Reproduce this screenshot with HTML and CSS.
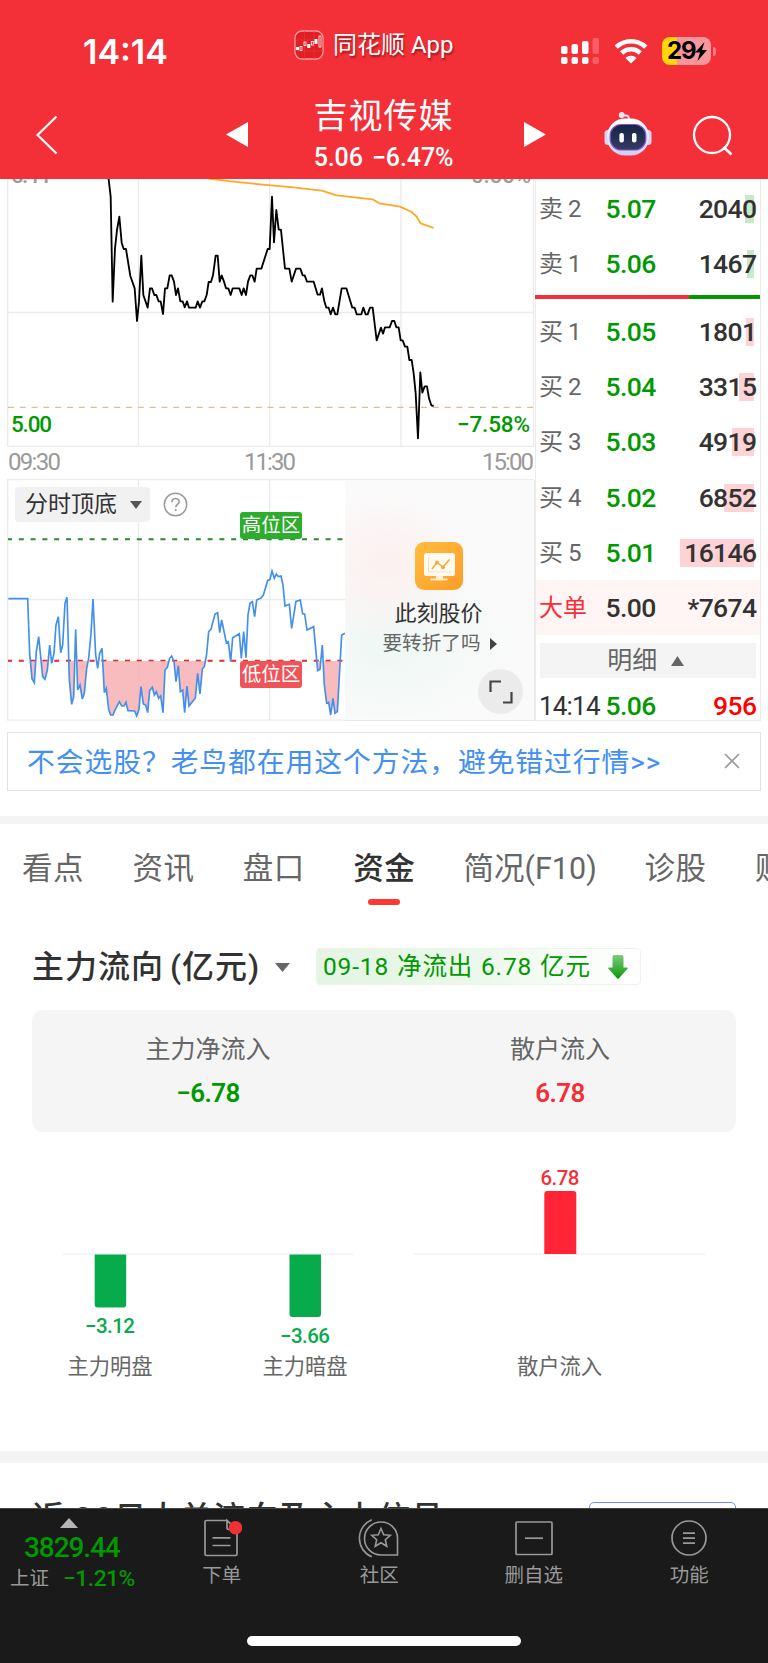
FILE: index.html
```html
<!DOCTYPE html>
<html lang="zh-CN">
<head>
<meta charset="utf-8">
<title>吉视传媒</title>
<link rel="stylesheet" href="styles.css">
</head>
<body>
<div class="app">
  <header class="header">
    <div class="status">
      <div class="clock">14:14</div>
      <div class="source">
        <svg width="30" height="30" viewBox="0 0 30 30"><rect x="1" y="1" width="28" height="28" rx="7" fill="#e01f24" stroke="#f79a9d" stroke-width="1.3"/><path d="M10.5 1v28M20 1v28M1 10h28M1 21h28" stroke="#e93a3e" stroke-width=".6"/><g fill="#fff"><rect x="2" y="17" width="3" height="3"/><rect x="13.300" y="14" width="3" height="4"/><rect x="20.500" y="9" width="3" height="5"/></g><g fill="none" stroke="#fff" stroke-width=".8"><rect x="6" y="16.500" width="2" height="4"/><rect x="10" y="12" width="2" height="3.500"/><rect x="17.300" y="11.500" width="2" height="3.500"/><rect x="25" y="6" width="2" height="11"/></g></svg>
        <span>同花顺 App</span>
      </div>
      <svg class="signal" width="40" height="28" viewBox="0 0 40 28"><g fill="#fff"><rect x="1" y="9" width="6.500" height="8" rx="2"/><rect x="11.500" y="7" width="6.500" height="10" rx="2"/><rect x="22" y="4" width="6.500" height="13" rx="2"/><rect x="1" y="20" width="6.500" height="7" rx="2"/><rect x="11.500" y="20" width="6.500" height="7" rx="2"/><rect x="22" y="20" width="6.500" height="7" rx="2"/></g><g fill="#fff" opacity=".22"><rect x="32.500" y="1" width="6.500" height="16" rx="2"/><rect x="32.500" y="20" width="6.500" height="7" rx="2"/></g></svg>
      <svg class="wifi" width="34" height="26" viewBox="0 0 34 26"><g fill="none" stroke="#fff" stroke-width="4.600"><path d="M2.200 9.200a21.500 21.500 0 0 1 29.600 0"/><path d="M7.600 15a13.700 13.700 0 0 1 18.800 0"/></g><path d="M17 25.500l-5.600-5.600a8.200 8.200 0 0 1 11.200 0z" fill="#fff"/></svg>
      <div class="battery"><span>29</span><svg width="12" height="19" viewBox="0 0 12 19"><path d="M9.500 0L0 10.500h5L2.500 19 12 8H7z" fill="#000"/></svg></div>
      <i class="battery-tip"></i>
    </div>
    <nav class="nav">
      <svg class="back" width="22" height="40" viewBox="0 0 22 40"><path d="M20.500 1.500L1.500 20l19 18.500" fill="none" stroke="#fff" stroke-width="2.200"/></svg>
      <svg class="prev" width="22" height="25" viewBox="0 0 22 25"><path d="M0 12.500L22 0v25z" fill="#fff"/></svg>
      <div class="stock"><h1>吉视传媒</h1><p>5.06 −6.47%</p></div>
      <svg class="next" width="22" height="25" viewBox="0 0 22 25"><path d="M22 12.500L0 0v25z" fill="#fff"/></svg>
      <svg class="robot" width="48" height="44" viewBox="0 0 48 44"><defs><linearGradient id="shell" x2="0" y2="1"><stop stop-color="#fff"/><stop offset="1" stop-color="#d3cdf3"/></linearGradient><linearGradient id="visor" x2="0" y2="1"><stop stop-color="#172343"/><stop offset="1" stop-color="#343b63"/></linearGradient></defs><path d="M18 3.500h4q3 0 3 4" fill="none" stroke="#f1e9f6" stroke-width="1.800"/><circle cx="17.700" cy="3" r="2.900" fill="#e6e6f5"/><rect x="0.500" y="18" width="7" height="15" rx="3.500" fill="#d8d3f2"/><rect x="40.500" y="18" width="7" height="15" rx="3.500" fill="#d8d3f2"/><rect x="3" y="6.500" width="42" height="37" rx="18" fill="url(#shell)"/><rect x="6.200" y="12.500" width="35.600" height="25.500" rx="11" fill="url(#visor)" stroke="#7458c8" stroke-width="1.200"/><rect x="15.400" y="21" width="4.500" height="9.500" rx="2" fill="#fff"/><rect x="28" y="21" width="4.500" height="9.500" rx="2" fill="#fff"/></svg>
      <svg class="search" width="42" height="42" viewBox="0 0 42 42"><circle cx="20" cy="20" r="18" fill="none" stroke="#fff" stroke-width="2.300"/><path d="M31.500 32l8 7.500" stroke="#fff" stroke-width="2.600"/></svg>
    </nav>
  </header>

  <section class="market">
    <div class="charts">
      <svg class="price-chart" width="535" height="301" viewBox="0 179 535 301">
        <g stroke="#ebebeb" stroke-width="1.300" fill="none"><path d="M7.700 179V446.300H533.500V179M138.500 179V446M269.700 179V446M401 179V446M8 312.500H533"/></g>
        <g class="axis dim"><text x="11" y="182.500" textLength="39">5.44</text><text x="471" y="182.500" textLength="60">0.00%</text></g>
        <path d="M8 407.300H533" stroke="#dfbd93" stroke-width="1.200" stroke-dasharray="6 5.800"/>
        <g transform="translate(0 170) scale(.33333)" fill="none" stroke-linejoin="round">
          <polyline stroke="#ffa726" stroke-width="5.500" points="625,26 700,35 780,43 880,52 965,62 1010,76 1118,88 1138,100 1200,110 1235,126 1250,140 1262,160 1301,174"/>
          <polyline stroke="#000" stroke-width="5.500" points="325,20 332,80 338,395 345,235 351,180 358,140 365,218 371,237 378,237 391,318 404,355 411,453 417,395 424,257 430,375 443,413 450,355 456,355 463,375 469,375 476,394 482,394 489,432 495,355 502,355 509,316 515,316 522,335 528,375 534,355 541,394 548,394 554,412 561,394 567,413 587,413 593,394 600,413 607,394 613,394 620,375 626,336 633,336 639,316 647,257 653,257 659,335 665,316 672,335 678,355 685,355 692,375 698,355 718,355 725,375 731,355 738,375 744,335 751,316 757,316 764,335 770,296 784,296 803,237 809,237 816,80 822,217 829,120 836,178 843,180 855,296 868,296 875,335 888,296 901,296 908,316 914,316 921,335 941,335 953,374 960,374 966,355 973,394 979,413 986,413 992,433 999,413 1006,433 1012,433 1025,355 1039,355 1057,413 1064,413 1070,433 1084,433 1090,413 1097,433 1103,433 1110,413 1118,413 1130,511 1143,473 1149,491 1155,472 1169,472 1176,453 1183,453 1189,472 1196,472 1202,511 1208,511 1215,530 1222,530 1228,570 1235,570 1241,610 1247,670 1254,805 1261,607 1267,668 1274,649 1281,649 1287,685 1294,706 1301,708"/>
        </g>
        <g class="axis low"><text x="11" y="432" textLength="41">5.00</text><text x="457" y="432" textLength="73">−7.58%</text></g>
        <g class="axis time"><text x="8" y="469.500" textLength="53">09:30</text><text x="244" y="469.500" textLength="52">11:30</text><text x="482" y="469.500" textLength="52">15:00</text></g>
      </svg>
      <div class="lower">
        <div class="indicator">
          <svg width="345" height="242" viewBox="0 479 345 242">
            <g stroke="#ebebeb" stroke-width="1.300" fill="none"><path d="M345 479.500H7.700V720.200H345M138.500 480V720M269.700 480V720M8 599.700H345"/></g>
            <clipPath id="below"><rect x="0" y="572" width="1050" height="200"/></clipPath>
            <path d="M8 539.200H345" stroke="#2a8a2e" stroke-width="2" stroke-dasharray="5 6.800" stroke-dashoffset="1"/>
            <path d="M8 660.800H345" stroke="#d8232a" stroke-width="2" stroke-dasharray="5 6.800" stroke-dashoffset="1"/>
            <g transform="translate(0 470) scale(.33333)">
              <polygon clip-path="url(#below)" fill="#f5a6a9" fill-opacity=".75" points="25,572 83,386 89,550 96,626 103,638 109,545 116,500 128,620 135,628 142,600 149,525 155,580 162,550 168,465 175,440 182,548 188,525 195,400 201,382 208,630 215,703 221,680 227,478 233,660 240,645 247,687 253,670 260,595 266,565 273,490 279,387 287,555 293,595 299,550 306,535 313,668 319,655 326,718 332,735 339,735 345,720 358,695 365,708 372,708 378,697 384,722 404,723 410,738 417,718 423,650 430,702 437,705 443,728 449,662 457,652 463,675 469,665 476,685 482,678 489,728 495,600 502,592 509,565 515,558 522,575 528,635 535,587 541,665 548,660 554,728 561,648 567,708 586,684 593,610 600,672 607,597 613,590 620,552 941,470 953,602 960,598 967,525 973,645 980,700 986,697 992,735 999,685 1005,730 1012,725 1025,495 1035,572"/>
              <polyline fill="none" stroke="#4390ec" stroke-width="5" points="25,386 83,386 89,550 96,626 103,638 109,545 116,500 128,620 135,628 142,600 149,525 155,580 162,550 168,465 175,440 182,548 188,525 195,400 201,382 208,630 215,703 221,680 227,478 233,660 240,645 247,687 253,670 260,595 266,565 273,490 279,387 287,555 293,595 299,550 306,535 313,668 319,655 326,718 332,735 339,735 345,720 358,695 365,708 372,708 378,697 384,722 404,723 410,738 417,718 423,650 430,702 437,705 443,728 449,662 457,652 463,675 469,665 476,685 482,678 489,728 495,600 502,592 509,565 515,558 522,575 528,635 535,587 541,665 548,660 554,728 561,648 567,708 586,684 593,610 600,672 607,597 613,590 620,552 626,485 633,478 645,432 653,428 659,488 665,450 679,518 685,515 692,575 698,503 718,491 724,565 731,485 738,563 744,435 750,400 757,395 764,440 770,390 783,384 790,375 803,332 810,328 816,303 823,325 829,312 835,320 843,318 849,345 855,408 868,403 875,475 888,394 901,390 908,432 914,432 921,480 941,470 953,602 960,598 967,525 973,645 980,700 986,697 992,735 999,685 1005,730 1012,725 1025,495 1035,490"/>
            </g>
          </svg>
          <div class="selector">分时顶底<svg width="12" height="8" viewBox="0 0 12 8"><path d="M0 0h12L6 8z" fill="#555"/></svg></div>
          <svg class="help" width="25" height="25" viewBox="0 0 25 25"><circle cx="12.500" cy="12.500" r="11.200" fill="none" stroke="#999" stroke-width="1.500"/><path d="M9 10.200c0-5 7.200-4.800 7.200-.4 0 2.500-3.500 2.800-3.500 5.400" fill="none" stroke="#999" stroke-width="1.600"/><circle cx="12.700" cy="18" r="1.100" fill="#999"/></svg>
          <span class="zone high">高位区</span>
          <span class="zone bottom">低位区</span>
        </div>
        <div class="promo">
          <svg class="promo-icon" width="48" height="48" viewBox="0 0 48 48"><defs><linearGradient id="gold" x2="1" y2="1"><stop stop-color="#ffbd3e"/><stop offset="1" stop-color="#ff9c27"/></linearGradient></defs><rect width="48" height="48" rx="9" fill="url(#gold)"/><rect x="9" y="11" width="31" height="23" rx="2.500" fill="#fffaf2"/><path d="M21 34h7v2.500h4.500v2h-17v-2H21z" fill="#ffeed4"/><path d="M13.500 15v15H36" fill="none" stroke="#ffe0b0" stroke-width="1"/><path d="M17 27l5-6.500 6 4.500 6.500-7.500" fill="none" stroke="#ffa52c" stroke-width="1.500"/><circle cx="22" cy="20.500" r="1.900" fill="#ffa52c"/><circle cx="28" cy="25.300" r="1.900" fill="#ffa52c"/></svg>
          <div class="promo-title">此刻股价</div>
          <div class="promo-sub">要转折了吗<svg width="7" height="12" viewBox="0 0 7 12"><path d="M0 0l7 6-7 6z" fill="#444"/></svg></div>
          <div class="expand"><svg width="24" height="24" viewBox="0 0 24 24"><path d="M1.500 12V1.500H12M14 22.500h8.500V12" fill="none" stroke="#444" stroke-width="2.200"/></svg></div>
        </div>
      </div>
    </div>
    <div class="book">
      <div class="row"><span>卖 2</span><b>5.07</b><em><i class="sell" style="width:9px"></i>2040</em></div>
      <div class="row"><span>卖 1</span><b>5.06</b><em><i class="sell" style="width:7px"></i>1467</em></div>
      <div class="ratio"><i></i></div>
      <div class="row"><span>买 1</span><b>5.05</b><em><i style="width:8px"></i>1801</em></div>
      <div class="row"><span>买 2</span><b>5.04</b><em><i style="width:15px"></i>3315</em></div>
      <div class="row"><span>买 3</span><b>5.03</b><em><i style="width:22px"></i>4919</em></div>
      <div class="row"><span>买 4</span><b>5.02</b><em><i style="width:30px"></i>6852</em></div>
      <div class="row"><span>买 5</span><b>5.01</b><em><i style="width:74px"></i>16146</em></div>
      <div class="row large"><span>大单</span><b>5.00</b><em>*7674</em></div>
      <div class="detail">明细<svg width="13" height="10" viewBox="0 0 13 10"><path d="M6.500 0L13 10H0z" fill="#666"/></svg></div>
      <div class="row tick"><span>14:14</span><b>5.06</b><em>956</em></div>
    </div>
  </section>

  <div class="notice"><span>不会选股？老鸟都在用这个方法，避免错过行情&gt;&gt;</span><svg width="16" height="16" viewBox="0 0 16 16"><path d="M1 1l14 14M15 1L1 15" stroke="#999" stroke-width="1.700"/></svg></div>

  <nav class="tabs"><span>看点</span><span>资讯</span><span>盘口</span><span class="active">资金</span><span class="wide">简况(F10)</span><span>诊股</span><span>财务</span></nav>

  <section class="flow">
    <div class="flow-head">
      <h2>主力流向<span>(亿元)</span></h2>
      <svg class="caret" width="15" height="9" viewBox="0 0 15 9"><path d="M0 0h15L7.500 9z" fill="#666"/></svg>
      <div class="tag"><span>09-18 净流出 6.78 亿元</span><svg width="20" height="24" viewBox="0 0 20 24"><defs><linearGradient id="drop" x2="0" y2="1"><stop stop-color="#7fcb7e"/><stop offset="1" stop-color="#089908"/></linearGradient></defs><path d="M4.500 2q0-2 2-2h7q2 0 2 2v10.500H19q1.500 0 .5 1.200l-8.500 9.600q-1 1-2 0L.5 13.700Q-.5 12.500 1 12.500h3.500z" fill="url(#drop)"/></svg></div>
    </div>
    <div class="summary">
      <div><span>主力净流入</span><b class="green">−6.78</b></div>
      <div><span>散户流入</span><b class="red">6.78</b></div>
    </div>
    <svg class="bars" width="768" height="319" viewBox="0 1132 768 319">
      <path d="M63 1254H353M414 1254H705" stroke="#f2f2f2" stroke-width="1.500"/>
      <path d="M94.700 1254.500h31.500v50q0 3-3 3h-25.500q-3 0-3-3zM289.500 1254.500H321v59.500q0 3-3 3h-25.500q-3 0-3-3z" fill="#07ab4b"/>
      <path d="M544.300 1254v-60q0-3 3-3h26q3 0 3 3v60z" fill="#ff2436"/>
      <g class="bar-value"><text x="110" y="1333.300" textLength="50" fill="#07ab4b">−3.12</text><text x="305" y="1342.700" textLength="50" fill="#07ab4b">−3.66</text><text x="560" y="1185" textLength="39" fill="#f5303a">6.78</text></g>
      <g class="bar-name"><text x="110" y="1374">主力明盘</text><text x="305" y="1374">主力暗盘</text><text x="559.500" y="1374">散户流入</text></g>
    </svg>
  </section>

  <section class="signals"><h2>近 <span>20</span>日大单流向及主力信号</h2><div class="outline"></div></section>

  <footer class="footer">
    <div class="dock">
      <div class="index"><svg width="18" height="10" viewBox="0 0 18 10"><path d="M9 0l9 10H0z" fill="#b5b5b5"/></svg><b>3829.44</b><p><span>上证</span><em>−1.21%</em></p></div>
      <div class="item order"><svg width="40" height="40" viewBox="0 0 40 40"><g fill="none" stroke="#999" stroke-width="1.700"><path d="M24.500 2.500H4.500Q3 2.500 3 4v32q0 1.500 1.500 1.500h29Q35 37.500 35 36V11.500h-8.500Q25 11.500 25 10V2.500l10 9M10.500 19.800h18M10.500 27.500h18"/></g><circle cx="33.500" cy="9.800" r="6.800" fill="#ef3036"/></svg><span>下单</span></div>
      <div class="item community"><svg width="44" height="40" viewBox="0 0 44 40"><g fill="none" stroke="#999" stroke-width="1.600"><path d="M24 4a16.500 16.500 0 0 0 0 33h16.500V20A16.300 16.300 0 0 0 24 4z"/><path d="M14.800 1.800a20 20 0 0 0 0 37"/><path d="M24 10.500l2.700 6.200 6.600.6-5 4.400 1.500 6.600-5.800-3.500-5.800 3.500 1.500-6.600-5-4.400 6.600-.6z"/></g></svg><span>社区</span></div>
      <div class="item remove"><svg width="40" height="40" viewBox="0 0 40 40"><g fill="none" stroke="#999" stroke-width="1.700"><rect x="2" y="4" width="36" height="32.500" rx="1"/><path d="M11 20.200h18"/></g></svg><span>删自选</span></div>
      <div class="item menu"><svg width="40" height="40" viewBox="0 0 40 40"><g fill="none" stroke="#999" stroke-width="1.700"><circle cx="20" cy="20" r="17"/><path d="M14 15.200h12M14 20.200h12M14 25.200h12"/></g></svg><span>功能</span></div>
    </div>
    <i class="home"></i>
  </footer>
</div>
</body>
</html>
```

FILE: styles.css
```css
* { box-sizing: border-box; }
body { margin: 0; background: #fff; color: #323232; font-family: Roboto, "Noto Sans CJK SC", sans-serif; }
h1, h2, p { margin: 0; font-weight: 400; }
svg { display: block; flex: none; }
i, em { font-style: normal; }
.app { width: 768px; height: 1663px; overflow: hidden; display: flex; flex-direction: column; }
.app > * { flex: none; }

.header { height: 179px; background: #f33038; color: #fff; }
.status { height: 90px; display: flex; align-items: flex-start; }
.clock { width: 210px; padding: 32px 0 0 83px; font: 600 34px/39px Inter, sans-serif; letter-spacing: 0; }
.source { width: 350px; padding: 30px 0 0 84px; display: flex; gap: 9px; font-size: 24px; line-height: 31px; text-shadow: 1px 2px 2px rgba(90, 0, 0, .55); white-space: nowrap; }
.signal { margin-top: 37px; }
.wifi { margin: 38px 0 0 14px; }
.battery { width: 49px; height: 28px; margin: 37px 0 0 14px; padding-left: 5px; border-radius: 8px; background: linear-gradient(90deg, #ffd60a 15px, #f9969b 15px); color: #000; display: flex; align-items: center; gap: 0; font: 700 24px/28px Inter, sans-serif; letter-spacing: -1.2px; }
.battery-tip { width: 3px; height: 9px; margin: 47px 0 0 2px; border-radius: 0 4px 4px 0; background: #f9797f; }
.nav { height: 89px; display: flex; align-items: flex-start; }
.back { margin: 25px 0 0 36px; }
.prev { margin: 32px 0 0 168px; }
.stock { width: 276px; text-align: center; padding-right: 5px; }
.stock h1 { height: 50px; font-size: 34px; line-height: 50px; letter-spacing: 1px; margin-top: 1px; }
.stock p { font-size: 25px; line-height: 32px; font-weight: 500; margin-top: 1px; letter-spacing: -.1px; word-spacing: 3px; }
.next { margin: 32px 0 0 0; }
.robot { margin: 22px 0 0 58px; }
.search { margin: 25px 0 0 40px; }

.market { height: 542px; display: flex; }
.charts { width: 535px; }
.axis { font-size: 22.500px; font-weight: 500; }
.dim { fill: #999; }
.low { fill: #090; }
.time { fill: #999; font-weight: 400; font-size: 24px; }
.lower { display: flex; height: 241px; border-right: 1.500px solid #e8e8e8; }
.indicator { position: relative; width: 345px; margin-top: -1px; }
.selector { position: absolute; left: 15px; top: 8px; width: 135px; height: 35px; padding-left: 10px; border-radius: 4px; background: #f1f1f1; display: flex; align-items: center; gap: 13px; font-size: 23px; line-height: 35px; }
.help { position: absolute; left: 163px; top: 13px; }
.zone { position: absolute; left: 240px; width: 62px; height: 27px; border-radius: 3px; color: #fff; font-size: 19.500px; line-height: 28px; text-align: center; }
.high { top: 33px; background: #2dac2d; }
.bottom { top: 182px; background: #f05459; }
.promo { position: relative; flex: 1; display: flex; flex-direction: column; align-items: center; padding: 62px 2px 0 0; margin-top: -1px; height: 242px; border-top: 1.500px solid #ebebeb; border-bottom: 1.500px solid #e8e8e8; background: radial-gradient(ellipse 90px 75px at 42px 85px, #fdf0f0, rgba(253, 240, 240, 0)), radial-gradient(ellipse 130px 85px at 40px 165px, #eef8f5, rgba(238, 248, 245, 0)), #fafafa; }
.promo-title { margin-top: 7px; font-size: 22px; line-height: 34px; }
.promo-sub { display: flex; align-items: center; gap: 10px; margin-left: 3px; color: #666; font-size: 19.600px; line-height: 26px; }
.expand { position: absolute; right: 11px; bottom: 6px; width: 45px; height: 45px; border-radius: 50%; background: #ebebeb; display: grid; place-items: center; }

.book { width: 225.500px; height: 542px; border: solid #ebebeb; border-width: 0 1.500px 1.500px 1px; padding-top: 2px; }
.row { height: 55.300px; display: grid; grid-template-columns: 66px 60px 1fr; align-items: center; padding: 1px 3px 0 4px; font-size: 26.500px; line-height: 36px; font-weight: 500; }
.row span { color: #666; font-size: 24px; font-weight: 400; white-space: nowrap; margin-left: -1px; word-spacing: -1px; }
.row b { color: #090; font-weight: 500; letter-spacing: -.6px; margin-left: -.5px; }
.row em { position: relative; text-align: right; letter-spacing: -.6px; z-index: 0; }
.row em i { position: absolute; right: 3px; top: 4px; height: 28px; background: #fdd3d5; z-index: -1; }
.row em .sell { background: #c9e9c9; }
.ratio { height: 4px; margin: 3.500px 0 4.500px -1px; background: #090; }
.ratio i { display: block; width: 154px; height: 4px; background: #f33038; }
.large { background: #fff5f5; }
.large span { color: #f33038; }
.row.large b { color: #323232; }
.detail { height: 35px; margin: 8px 4px 0; background: #f4f4f4; display: flex; align-items: center; justify-content: center; gap: 14px; padding-right: 4px; color: #666; font-size: 25px; line-height: 35px; }
.row.tick { height: 42px; padding-top: 10px; }
.tick span { color: #323232; font-size: 26px; letter-spacing: -.8px; }
.tick em { color: #f00; }

.notice { height: 59px; margin: 11px 7px 25px; border: 1.500px solid #e4e4e4; padding: 0 20px 3px 19px; display: flex; align-items: center; justify-content: space-between; color: #4390f2; font-size: 27.800px; letter-spacing: .93px; white-space: nowrap; }
.notice svg { margin-top: 2px; }
.tabs { height: 97px; border-top: 8px solid #f4f4f4; padding: 16px 0 0 22px; display: flex; overflow: hidden; color: #666; font-size: 30.500px; line-height: 58px; letter-spacing: .5px; white-space: nowrap; }
.tabs span { flex: none; width: 110.400px; }
.tabs .wide { width: 181px; letter-spacing: 0; }
.tabs .active { position: relative; color: #323232; font-weight: 500; }
.active::after { content: ""; position: absolute; left: 15px; top: 58.500px; width: 32px; height: 6px; border-radius: 3px; background: #fb3a33; }

.flow { height: 538px; }
.flow-head { height: 97px; padding: 35px 0 0 32px; display: flex; }
.flow h2, .signals h2 { color: #323232; font-size: 32px; line-height: 38px; font-weight: 500; letter-spacing: 1px; white-space: nowrap; }
.flow h2 { width: 243px; }
.flow h2 span { margin-left: 6px; }
.caret { margin-top: 14.500px; }
.tag { width: 325px; height: 37px; margin-left: 26px; padding-left: 6px; border: 1px solid #e9f7e9; border-radius: 4px; background: linear-gradient(90deg, #e5f4e5, #eaf7ea 45%, #fff 95%); display: flex; align-items: center; gap: 14px; color: #090; font-size: 24.500px; line-height: 36px; letter-spacing: .85px; word-spacing: 1px; white-space: nowrap; }
.tag span { width: 271px; }
.summary { margin: 0 32px; height: 122px; border-radius: 11px; background: #f5f5f5; display: flex; padding-top: 21px; text-align: center; }
.summary div { width: 50%; }
.summary span { display: block; color: #666; font-size: 25px; line-height: 38px; }
.summary b { display: block; font-size: 26px; line-height: 32px; font-weight: 600; margin-top: 8px; letter-spacing: -.6px; }
.green { color: #090; }
.red { color: #f33038; }
.bar-value { font-size: 20.500px; font-weight: 500; text-anchor: middle; }
.bar-name { fill: #666; font-size: 21.300px; text-anchor: middle; }

.signals { height: 57px; border-top: 12px solid #f4f4f4; padding: 36px 32px 0; display: flex; justify-content: space-between; overflow: hidden; }
.signals h2 span { letter-spacing: 2px; }
.outline { width: 147px; height: 50px; margin-top: 3px; border: 1.500px solid #6d8dff; border-radius: 5px; }

.footer { height: 155px; background: #1a1a1a; border-top: 1px solid #444; }
.dock { height: 127px; display: flex; }
.index { width: 147px; display: flex; flex-direction: column; padding: 9px 0 0 11px; }
.index svg { margin-left: 49px; }
.index b { margin-left: 13px; color: #090; font-size: 28px; line-height: 36px; font-weight: 500; letter-spacing: -1.100px; margin-top: 2px; }
.index p { display: flex; align-items: center; gap: 14px; margin-left: -1px; color: #999; font-size: 19.500px; line-height: 26px; }
.index em { color: #090; font-size: 22.800px; font-weight: 500; letter-spacing: -.5px; }
.item { width: 155.500px; display: flex; flex-direction: column; align-items: center; padding-top: 9px; color: #999; font-size: 19.500px; line-height: 26px; }
.item span { margin-top: 5px; }
.order { margin-left: -3px; }
.community { margin-left: 2px; }
.remove { margin-left: -1px; }
.home { display: block; width: 274px; height: 10px; margin: 0 auto; border-radius: 5px; background: #fff; }
```
